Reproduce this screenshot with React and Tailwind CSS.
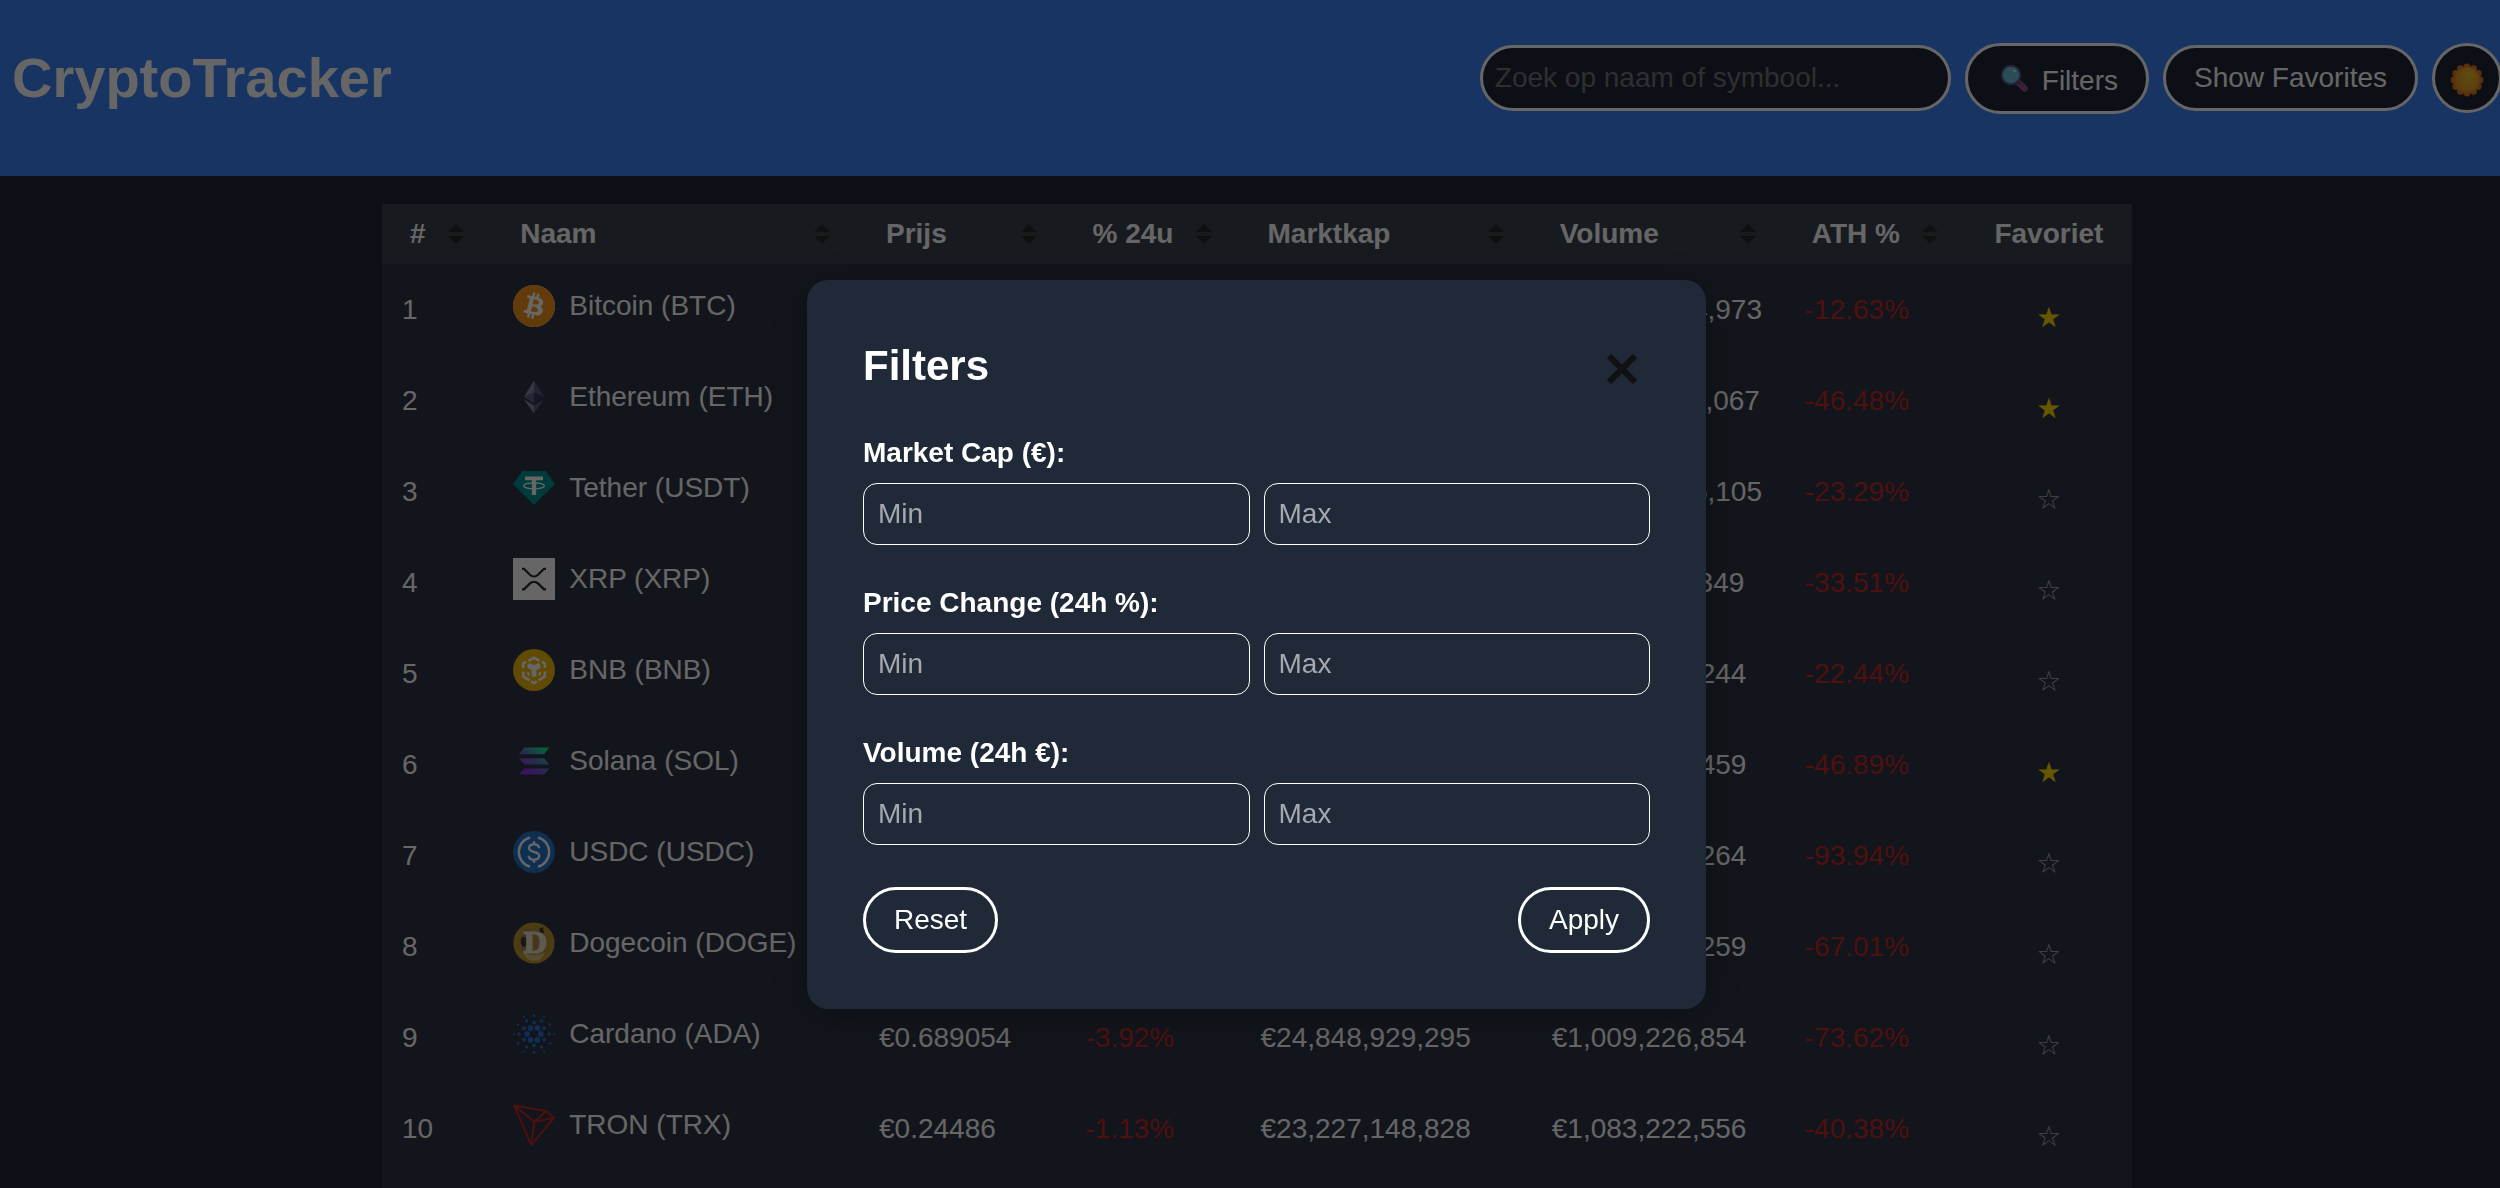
import React from "react";
import { SiBitcoin } from "react-icons/si";

const ICON = "block size-[42px] shrink-0";

function BitcoinIcon() {
  return (
    <span className="block size-[42px] shrink-0 rounded-full bg-white">
      <SiBitcoin className="block size-[42px] text-[#f7931a]" aria-hidden="true" />
    </span>
  );
}

function EthereumIcon() {
  return (
    <svg viewBox="0 0 42 42" className={ICON} aria-hidden="true">
      <path d="M21 4.5 10.8 21 21 16.5z" fill="#8a8aa8" />
      <path d="M21 4.5 31.2 21 21 16.5z" fill="#5c5a80" />
      <path d="M10.8 21 21 16.5V27z" fill="#62608c" />
      <path d="M31.2 21 21 16.5V27z" fill="#3c3a66" />
      <path d="M10.8 23.2 21 29.4v8.2z" fill="#8a8aa8" />
      <path d="M31.2 23.2 21 29.4v8.2z" fill="#5c5a80" />
    </svg>
  );
}

function TetherIcon() {
  return (
    <svg viewBox="0 0 42 42" className={ICON} aria-hidden="true">
      <path d="M9.2 4h23.6L42 17.2 21 37.8 0 17.2z" fill="#009393" />
      <path d="M12 9.5h18v3.8h-6.8V28h-4.4V13.3H12z" fill="#fff" />
      <ellipse cx="21" cy="18.8" rx="10.4" ry="3" fill="none" stroke="#fff" strokeWidth="1.3" />
    </svg>
  );
}

function XrpIcon() {
  return (
    <svg viewBox="0 0 42 42" className={ICON} aria-hidden="true">
      <rect width="42" height="42" rx="0.5" fill="#fff" />
      <g fill="none" stroke="#23292f" strokeWidth="2.2">
        <path d="M9 10.8h2l6 6a5.8 5.8 0 0 0 8 0l6-6h2" />
        <path d="M9 31.4h2l6-6a5.8 5.8 0 0 1 8 0l6 6h2" />
      </g>
    </svg>
  );
}

function BnbIcon() {
  return (
    <svg viewBox="0 0 42 42" className={ICON} aria-hidden="true">
      <circle cx="21" cy="21" r="21" fill="#f0b90b" />
      <g fill="none" stroke="#fff" strokeWidth="2.6" strokeLinejoin="miter">
        <path d="M15.5 11.8 21 8.8l5.5 3" />
        <path d="M10.2 19v-4.6l3-1.8M31.8 19v-4.6l-3-1.8" />
        <path d="M10.2 22.6v5l6.4 3.7M31.8 22.6v5l-6.4 3.7" />
        <path d="M18 32.3 21 34l3-1.7" />
      </g>
      <path d="M14.4 15.4 17 14l4 2.3 4-2.3 2.6 1.4v3.3L23.4 21v5.8L21 28.2l-2.4-1.4V21l-4.2-2.3z" fill="#fff" />
      <path d="M14.2 22.4l2.4 1.4v3.2l-2.4-1.4zM27.8 22.4l-2.4 1.4v3.2l2.4-1.4z" fill="#fff" />
    </svg>
  );
}

function SolanaIcon() {
  return (
    <svg viewBox="0 0 42 42" className={ICON} aria-hidden="true">
      <defs>
        <linearGradient id="sol" gradientUnits="userSpaceOnUse" x1="34" y1="6" x2="12" y2="36">
          <stop offset="0.1" stopColor="#14f195" />
          <stop offset="0.5" stopColor="#5f6fc4" />
          <stop offset="0.85" stopColor="#9035ee" />
        </linearGradient>
      </defs>
      <path
        d="M11.3 7.6h25l-5.2 6.6H6zM6 18.2h25.1l5.2 6.4h-25zM11.3 28.4h25L31.1 34.4H6z"
        fill="url(#sol)"
      />
    </svg>
  );
}

function UsdcIcon() {
  return (
    <svg viewBox="0 0 42 42" className={ICON} aria-hidden="true">
      <circle cx="21" cy="21" r="21" fill="#2775ca" />
      <g fill="none" stroke="#fff" strokeWidth="2.4">
        <path d="M17 6.5a15 15 0 0 0 0 29M25 6.5a15 15 0 0 1 0 29" />
        <path d="M26 17.3c0-2.4-2-3.900-5-3.900s-5 1.300-5 3.700c0 5.400 10.200 2.400 10.200 7.700 0 2.500-2.100 3.900-5.200 3.900s-5.200-1.500-5.200-4" />
        <path d="M21 10.3v3.4M21 28.3v3.5" />
      </g>
    </svg>
  );
}

function DogecoinIcon() {
  return (
    <svg viewBox="0 0 42 42" className={ICON} aria-hidden="true">
      <circle cx="21" cy="21" r="20.6" fill="#c09a2c" />
      <circle cx="21" cy="21" r="17" fill="#b8923a" />
      <path d="M8 14l4-8 5 4 8-1 4-4 2 8 2 8-1 10-11 8-9-3-4-8z" fill="#a88748" />
      <path d="M8 17c2-3 5-3 6 0l1 7-5 1c-2-2-3-5-2-8zM26 7l4-2 1 6-3 1z" fill="#4a3c1c" />
      <path d="M10 30c6 4 16 4 22 0-2 6-6 9-11 9s-9-3-11-9z" fill="#d8c078" />
      <text
        x="22"
        y="31"
        textAnchor="middle"
        fontFamily="DejaVu Serif, serif"
        fontWeight="700"
        fontSize="28"
        fill="#e9e2cc"
        stroke="#e9e2cc"
        strokeWidth="1"
      >
        D
      </text>
    </svg>
  );
}

const ADA_RINGS = [
  { radius: 6.8, dot: 2.9, turn: 0 },
  { radius: 11.6, dot: 2, turn: 30 },
  { radius: 15, dot: 1.7, turn: 0 },
  { radius: 18.4, dot: 1.3, turn: 30 },
  { radius: 20.2, dot: 1.1, turn: 0 },
];

function CardanoIcon() {
  return (
    <svg viewBox="0 0 42 42" className={ICON} fill="#2a71d0" aria-hidden="true">
      {ADA_RINGS.map((ring) =>
        [0, 60, 120, 180, 240, 300].map((step) => {
          const angle = ((step + ring.turn) * Math.PI) / 180;
          return (
            <circle
              key={`${ring.radius}-${step}`}
              cx={21 + ring.radius * Math.cos(angle)}
              cy={21 + ring.radius * Math.sin(angle)}
              r={ring.dot}
            />
          );
        })
      )}
    </svg>
  );
}

function TronIcon() {
  return (
    <svg viewBox="0 0 42 42" className={ICON} aria-hidden="true">
      <g fill="none" stroke="#c4281f" strokeWidth="2" strokeLinejoin="round">
        <path d="M1.2 1.6 33.4 6.9 41 14 18.2 40.8z" />
        <path d="M1.2 1.6 21.3 17.8 41 14M33.4 6.9 21.3 17.8 18.2 40.8" />
      </g>
    </svg>
  );
}

function SearchIcon() {
  return (
    <svg viewBox="0 0 38 38" className="block size-[38px]" aria-hidden="true">
      <path d="M23.5 23.5 28.500 28.500" stroke="#93508f" strokeWidth="6.5" strokeLinecap="round" />
      <path d="M21 21 24 24" stroke="#6b3f7c" strokeWidth="3" />
      <circle cx="15" cy="15" r="9.3" fill="#66c3dc" stroke="#5d5588" strokeWidth="2" />
      <circle cx="18.4" cy="11" r="1.6" fill="#b4ecf7" />
    </svg>
  );
}

function SunIcon() {
  return (
    <svg viewBox="0 0 34 34" className="block size-[34px] shrink-0" aria-hidden="true">
      <defs>
        <radialGradient id="sun" cx="0.6" cy="0.3" r="0.8">
          <stop offset="0" stopColor="#f0bf2a" />
          <stop offset="1" stopColor="#e08e22" />
        </radialGradient>
      </defs>
      <circle cx="17" cy="17" r="13.5" fill="#e2761d" />
      {Array.from({ length: 12 }, (_, i) => {
        const angle = (i * Math.PI) / 6;
        return (
          <circle
            key={i}
            cx={17 + 13 * Math.cos(angle)}
            cy={17 + 13 * Math.sin(angle)}
            r="3.4"
            fill="#e2761d"
          />
        );
      })}
      <circle cx="17" cy="17" r="12.5" fill="url(#sun)" />
    </svg>
  );
}

const COLUMNS = [
  { label: "#", width: "w-[6.3%]" },
  { label: "Naam", width: "w-[20.9%]" },
  { label: "Prijs", width: "w-[11.8%]" },
  { label: "% 24u", width: "w-[10%]" },
  { label: "Marktkap", width: "w-[16.7%]" },
  { label: "Volume", width: "w-[14.4%]" },
  { label: "ATH %", width: "w-[10.4%]" },
];

const COINS = [
  { name: "Bitcoin (BTC)", Icon: BitcoinIcon, price: "€91,284", day: "-1.52%", cap: "€1,812,405,118", volume: "€27,641,024,973", ath: "-12.63%", fav: true },
  { name: "Ethereum (ETH)", Icon: EthereumIcon, price: "€2,412.18", day: "-2.87%", cap: "€291,066,214,870", volume: "€18,204,110,067", ath: "-46.48%", fav: true },
  { name: "Tether (USDT)", Icon: TetherIcon, price: "€0.88214", day: "-0.02%", cap: "€134,502,661,932", volume: "€61,870,335,105", ath: "-23.29%", fav: false },
  { name: "XRP (XRP)", Icon: XrpIcon, price: "€2.18", day: "-2.11%", cap: "€128,310,744,506", volume: "€2,904,117,349", ath: "-33.51%", fav: false },
  { name: "BNB (BNB)", Icon: BnbIcon, price: "€571.42", day: "-0.94%", cap: "€83,361,905,227", volume: "€1,148,602,244", ath: "-22.44%", fav: false },
  { name: "Solana (SOL)", Icon: SolanaIcon, price: "€151.33", day: "-3.41%", cap: "€78,640,228,415", volume: "€3,615,274,459", ath: "-46.89%", fav: true },
  { name: "USDC (USDC)", Icon: UsdcIcon, price: "€0.88197", day: "-0.01%", cap: "€53,907,416,088", volume: "€8,733,051,264", ath: "-93.94%", fav: false },
  { name: "Dogecoin (DOGE)", Icon: DogecoinIcon, price: "€0.201846", day: "-4.26%", cap: "€30,126,884,731", volume: "€1,526,990,259", ath: "-67.01%", fav: false },
  { name: "Cardano (ADA)", Icon: CardanoIcon, price: "€0.689054", day: "-3.92%", cap: "€24,848,929,295", volume: "€1,009,226,854", ath: "-73.62%", fav: false },
  { name: "TRON (TRX)", Icon: TronIcon, price: "€0.24486", day: "-1.13%", cap: "€23,227,148,828", volume: "€1,083,222,556", ath: "-40.38%", fav: false },
];

const FILTERS = [
  { id: "cap", label: "Market Cap (€):" },
  { id: "change", label: "Price Change (24h %):" },
  { id: "volume", label: "Volume (24h €):" },
];

function SortButton({ label }) {
  return (
    <button type="button" aria-label={`Sorteer op ${label}`} className="text-[#2a2a2a]">
      <svg viewBox="0 0 16 20" className="block h-5 w-4" fill="currentColor" aria-hidden="true">
        <path d="M8 0l8 8H0zM8 20l8-8H0z" />
      </svg>
    </button>
  );
}

function Header() {
  return (
    <header className="flex items-start justify-between overflow-hidden bg-[#3b82f6] pt-[43px] pb-[62px] pl-3 text-white">
      <h1 className="text-[56px] leading-[70px] font-bold">CryptoTracker</h1>
      <div className="-mr-0.5 flex items-start gap-3.5">
        <input
          type="text"
          aria-label="Zoek op naam of symbool"
          placeholder="Zoek op naam of symbool..."
          className="mt-0.5 h-[66px] w-[471px] rounded-full border-3 border-white bg-[#1f2937] px-3 placeholder:text-[#757575]"
        />
        <button
          type="button"
          className="flex h-[71px] items-center gap-2 rounded-full border-3 border-white bg-[#1f2937] px-7 leading-8"
        >
          <SearchIcon />
          <span className="pt-1">Filters</span>
        </button>
        <button type="button" className="mt-0.5 h-[66px] rounded-full border-3 border-white bg-[#1f2937] px-7 leading-8">
          Show Favorites
        </button>
        <button
          type="button"
          aria-label="Wissel thema"
          className="flex size-[70px] shrink-0 items-center justify-center rounded-full border-3 border-white bg-[#1f2937] pt-1"
        >
          <SunIcon />
        </button>
      </div>
    </header>
  );
}

function CoinTable() {
  return (
    <table className="w-full table-fixed border-collapse text-left">
      <thead className="bg-[#3a414f]">
        <tr>
          {COLUMNS.map((column) => (
            <th key={column.label} scope="col" className={`${column.width} h-[60px] px-7 font-bold`}>
              <div className="flex items-center justify-between leading-8">
                <span className="whitespace-nowrap">{column.label}</span>
                <SortButton label={column.label} />
              </div>
            </th>
          ))}
          <th scope="col" className="w-[9.5%] text-center leading-8 font-bold">
            Favoriet
          </th>
        </tr>
      </thead>
      <tbody>
        {COINS.map(({ name, Icon, price, day, cap, volume, ath, fav }, index) => (
          <tr key={name} className="h-[91px] leading-8">
            <td className="pl-5">{index + 1}</td>
            <td className="pl-[21px]">
              <div className="flex items-center gap-3.5 pb-[7px] whitespace-nowrap">
                <Icon />
                {name}
              </div>
            </td>
            <td className="pl-[21px]">{price}</td>
            <td className="pl-[21px] text-[#c62828]">{day}</td>
            <td className="pl-[21px]">{cap}</td>
            <td className="pl-5">{volume}</td>
            <td className="pl-[21px] text-[#c62828]">{ath}</td>
            <td className="pt-4 text-center">
              <button
                type="button"
                aria-label={`Favoriet ${name}`}
                aria-pressed={fav}
                className={fav ? "font-['DejaVu_Sans'] text-[28px] text-[#ffd700]" : "font-['DejaVu_Sans'] text-[28px] text-[#b4b4b4]"}
              >
                {fav ? "★" : "☆"}
              </button>
            </td>
          </tr>
        ))}
      </tbody>
    </table>
  );
}

function FilterDialog() {
  return (
    <div className="fixed inset-0 flex items-start justify-center bg-black/60 pt-[280px] pl-[13px]">
      <div
        role="dialog"
        aria-modal="true"
        aria-labelledby="filter-title"
        className="flex w-[899px] max-w-full flex-col gap-[42px] rounded-[21px] bg-[#1f2937] p-14 text-white shadow-[0_6px_42px_rgba(0,0,0,0.3)]"
      >
        <div className="flex h-[59px] items-center justify-between">
          <h2 id="filter-title" className="text-[42px] leading-[59px] font-bold">
            Filters
          </h2>
          <button type="button" aria-label="Sluiten" className="flex w-14 justify-center pt-1.5 text-[#111111]">
            <svg viewBox="0 0 30 30" className="block size-[30px]" stroke="currentColor" strokeWidth="6" aria-hidden="true">
              <path d="M2 2l26 26M28 2L2 28" />
            </svg>
          </button>
        </div>
        {FILTERS.map((filter) => (
          <div key={filter.id}>
            <label htmlFor={`${filter.id}-min`} className="block leading-8 font-bold">
              {filter.label}
            </label>
            <div className="mt-3.5 grid grid-cols-2 gap-3.5">
              <input
                id={`${filter.id}-min`}
                type="text"
                inputMode="decimal"
                placeholder="Min"
                className="w-full rounded-[14px] border border-white bg-transparent px-3.5 py-3.5 leading-8 placeholder:text-[#a6a8ad]"
              />
              <input
                type="text"
                inputMode="decimal"
                aria-label={`${filter.label} max`}
                placeholder="Max"
                className="w-full rounded-[14px] border border-white bg-transparent px-3.5 py-3.5 leading-8 placeholder:text-[#a6a8ad]"
              />
            </div>
          </div>
        ))}
        <div className="flex justify-between">
          <button type="button" className="rounded-full border-3 border-white px-7 py-3.5 leading-8">
            Reset
          </button>
          <button type="button" className="rounded-full border-3 border-white px-7 py-3.5 leading-8">
            Apply
          </button>
        </div>
      </div>
    </div>
  );
}

export default function App() {
  return (
    <div className="flex min-h-screen flex-col bg-[#1f2637] font-['Liberation_Sans',Arial,sans-serif] text-[28px] text-white">
      <Header />
      <main className="flex flex-1 flex-col pt-7 pl-3.5">
        <div className="mx-auto w-[70vw] flex-1 bg-[#2d3544]">
          <CoinTable />
        </div>
      </main>
      <FilterDialog />
    </div>
  );
}
